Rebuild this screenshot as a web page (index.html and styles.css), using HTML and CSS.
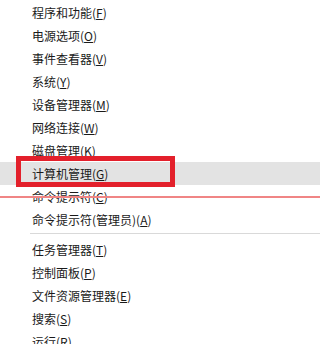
FILE: index.html
```html
<!DOCTYPE html>
<html lang="zh-CN">
<head>
<meta charset="utf-8">
<title>菜单</title>
<link rel="stylesheet" href="styles.css">
</head>
<body>
<ul class="menu">
  <li class="item">程序和功能(<u>F</u>)</li>
  <li class="item">电源选项(<u>O</u>)</li>
  <li class="item">事件查看器(<u>V</u>)</li>
  <li class="item">系统(<u>Y</u>)</li>
  <li class="item">设备管理器(<u>M</u>)</li>
  <li class="item">网络连接(<u>W</u>)</li>
  <li class="item">磁盘管理(<u>K</u>)</li>
  <li class="item item-active">计算机管理(<u>G</u>)<span class="mark-box"></span></li>
  <li class="item">命令提示符(<u>C</u>)<span class="mark-line"></span></li>
  <li class="item">命令提示符(管理员)(<u>A</u>)</li>
  <li class="sep"></li>
  <li class="item">任务管理器(<u>T</u>)</li>
  <li class="item">控制面板(<u>P</u>)</li>
  <li class="item">文件资源管理器(<u>E</u>)</li>
  <li class="item">搜索(<u>S</u>)</li>
  <li class="item">运行(<u>R</u>)</li>
</ul>
</body>
</html>
```
FILE: styles.css
```css
html, body {
  margin: 0;
  padding: 0;
  background: #ffffff;
  overflow: hidden;
}
.menu {
  list-style: none;
  margin: 0;
  padding: 1px 0 0 0;
  font-family: "Noto Sans CJK SC", "Microsoft YaHei", sans-serif;
  font-size: 12px;
  color: #1a1a1a;
}
.item {
  position: relative;
  height: 23px;
  line-height: 23px;
  padding-left: 32px;
  white-space: nowrap;
}
.item u {
  text-underline-offset: 1px;
}
.item-active {
  background: #e3e3e3;
}
.mark-box {
  position: absolute;
  left: 16px;
  top: -6px;
  width: 159px;
  height: 31px;
  box-sizing: border-box;
  border: 5px solid #e3202b;
}
.mark-line {
  position: absolute;
  left: 0;
  right: 0;
  top: 11px;
  height: 2px;
  background: #f08585;
}
.sep {
  height: 1px;
  margin: 2px 0 4px 30px;
  background: #d9d9d9;
}
```
